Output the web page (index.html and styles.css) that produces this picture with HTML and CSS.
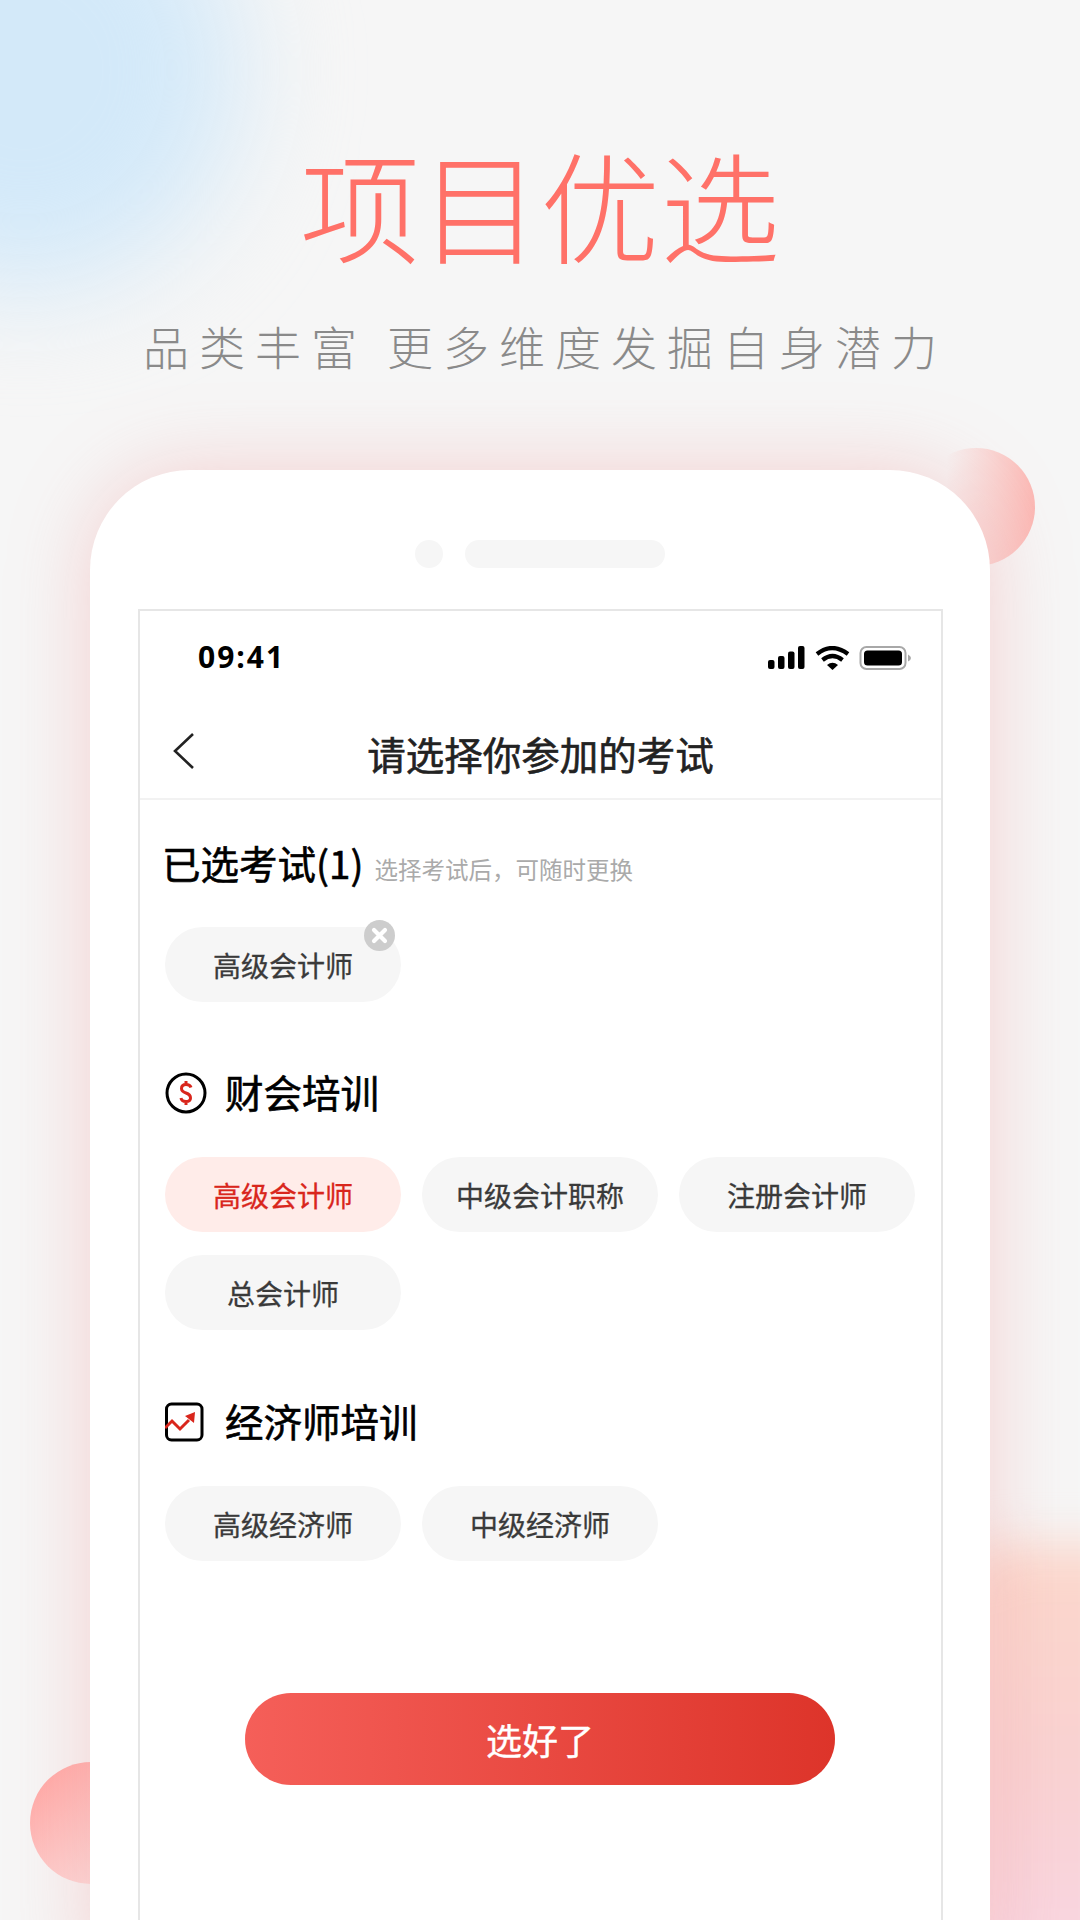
FILE: index.html
```html
<!DOCTYPE html>
<html lang="en">
<head>
    <meta charset="UTF-8">
    <meta name="viewport" content="width=device-width, initial-scale=1.0">
    <title>项目优选</title>
    <link rel="stylesheet" href="styles.css">
</head>
<body>
    <div class="page">
        <div class="blob blob-blue"></div>
        <div class="blob blob-peach"></div>
        <div class="blob blob-top"></div>
        <div class="blob blob-bottom"></div>

        <header class="hero">
            <h1 class="hero-title">项目优选</h1>
            <p class="hero-sub">品类丰富 更多维度发掘自身潜力</p>
        </header>

        <div class="phone">
            <div class="speaker">
                <span class="speaker-dot"></span>
                <span class="speaker-bar"></span>
            </div>

            <div class="screen">
                <div class="status">
                    <span class="time">09:41</span>
                    <svg class="status-icons" width="144" height="26" viewBox="0 0 144 26">
                        <!-- signal -->
                        <rect x="0" y="14" width="6.5" height="9" rx="2" fill="#000"/>
                        <rect x="10" y="10" width="6.5" height="13" rx="2" fill="#000"/>
                        <rect x="20" y="5.500" width="6.5" height="17.500" rx="2" fill="#000"/>
                        <rect x="30" y="0" width="6.500" height="23" rx="2" fill="#000"/>
                        <!-- wifi -->
                        <path d="M49 8 Q64 -4 80 8" fill="none" stroke="#000" stroke-width="4.200"/>
                        <path d="M54.500 14 Q64.500 6 74.500 14" fill="none" stroke="#000" stroke-width="4.200"/>
                        <path d="M59 19 Q64.500 14.500 70 19 L64.500 24 Z" fill="#000"/>
                        <!-- battery -->
                        <rect x="92.500" y="1" width="45" height="22" rx="6" fill="none" stroke="#a8a8a8" stroke-width="2"/>
                        <rect x="96" y="4.500" width="38" height="15" rx="3.500" fill="#000"/>
                        <path d="M140 8.500 Q143 10 143 12 Q143 14 140 15.500 Z" fill="#a8a8a8"/>
                    </svg>
                </div>

                <div class="nav">
                    <svg class="nav-back" width="24" height="38" viewBox="0 0 24 38">
                        <path d="M21 2 L3 19 L21 36" fill="none" stroke="#222" stroke-width="2.600"/>
                    </svg>
                    <span class="nav-title">请选择你参加的考试</span>
                </div>

                <div class="content">
                    <section class="picked">
                        <div class="picked-head">
                            <h2 class="picked-title">已选考试(1)</h2>
                            <span class="picked-hint">选择考试后，可随时更换</span>
                        </div>
                        <div class="chips">
                            <span class="chip">高级会计师
                                <svg class="chip-close" width="31" height="31" viewBox="0 0 31 31">
                                    <circle cx="15.500" cy="15.500" r="15.500" fill="#cdcdcd"/>
                                    <path d="M10 10 L21 21 M21 10 L10 21" stroke="#fff" stroke-width="4.200" stroke-linecap="round"/>
                                </svg>
                            </span>
                        </div>
                    </section>

                    <section class="group group-finance">
                        <div class="group-head">
                            <svg width="42" height="42" viewBox="0 0 42 42">
                                <circle cx="21" cy="21" r="19" fill="none" stroke="#000" stroke-width="3"/>
                                <path d="M26 15.500 Q25 12.500 21 12.500 Q16.500 12.500 16.500 16.500 Q16.500 19.500 21 21 Q25.500 22.500 25.500 26 Q25.500 29.500 21 29.500 Q16.500 29.500 16 26 M21 9 L21 12.500 M21 29.500 L21 33" fill="none" stroke="#d9261c" stroke-width="3"/>
                            </svg>
                            <h2 class="group-title">财会培训</h2>
                        </div>
                        <div class="chips">
                            <span class="chip chip-active">高级会计师</span>
                            <span class="chip">中级会计职称</span>
                            <span class="chip">注册会计师</span>
                            <span class="chip">总会计师</span>
                        </div>
                    </section>

                    <section class="group group-economy">
                        <div class="group-head">
                            <svg width="42" height="42" viewBox="0 0 42 42">
                                <rect x="1.500" y="3" width="35.500" height="36" rx="5" fill="none" stroke="#000" stroke-width="3"/>
                                <path d="M0 27 L7 20 L15 28 L24 19" fill="none" stroke="#d9261c" stroke-width="3"/>
                                <path d="M20 15 L30 11 L29 22 Z" fill="#d9261c"/>
                            </svg>
                            <h2 class="group-title">经济师培训</h2>
                        </div>
                        <div class="chips">
                            <span class="chip">高级经济师</span>
                            <span class="chip">中级经济师</span>
                        </div>
                    </section>

                    <button class="done">选好了</button>
                </div>
            </div>
        </div>
    </div>
</body>
</html>
```

FILE: styles.css
```css
* {
    box-sizing: border-box;
}

body {
    margin: 0;
    font-family: "Noto Sans CJK SC", "Noto Sans", sans-serif;
}

h1, h2, p {
    margin: 0;
    font-weight: 400;
}

.page {
    position: relative;
    width: 1080px;
    height: 1920px;
    overflow: hidden;
    background-color: #f6f6f6;
}

.blob {
    position: absolute;
    border-radius: 50%;
}

.blob-blue {
    left: -190px;
    top: -150px;
    width: 430px;
    height: 440px;
    background-color: #d3e9f9;
    filter: blur(55px);
}

.blob-peach {
    left: 965px;
    top: 1545px;
    width: 240px;
    height: 480px;
    border-radius: 40px;
    background: linear-gradient(180deg, #fbd8cc 0%, #f9d2d2 45%, #f8d8e8 100%);
    filter: blur(24px);
}

.blob-top {
    left: 917px;
    top: 448px;
    width: 118px;
    height: 118px;
    background: linear-gradient(90deg, rgba(250, 230, 230, 0) 25%, #fbb8b4 100%);
}

.blob-bottom {
    left: 30px;
    top: 1762px;
    width: 122px;
    height: 122px;
    background: linear-gradient(135deg, #ffa9a6 10%, #fbe4e4 85%);
}

.hero {
    position: relative;
    padding-top: 128px;
    text-align: center;
}

.hero-title {
    font-size: 120px;
    font-weight: 300;
    line-height: 150px;
    color: #ff7168;
}

.hero-sub {
    margin-top: 37px;
    padding-left: 10px;
    font-size: 46px;
    font-weight: 300;
    line-height: 60px;
    letter-spacing: 10px;
    color: #8a8a8a;
}

.phone {
    position: relative;
    width: 900px;
    height: 1500px;
    margin: 95px auto 0;
    padding-top: 70px;
    background-color: #fff;
    border-radius: 100px 100px 0 0;
    box-shadow: 0 0 80px rgba(240, 140, 140, 0.36);
}

.speaker {
    display: flex;
    justify-content: center;
    align-items: center;
    gap: 22px;
    height: 28px;
}

.speaker-dot {
    width: 28px;
    height: 28px;
    border-radius: 50%;
    background-color: #f6f6f6;
}

.speaker-bar {
    width: 200px;
    height: 28px;
    border-radius: 14px;
    background-color: #f6f6f6;
}

.screen {
    width: 805px;
    height: 1400px;
    margin: 41px 0 0 48px;
    border: 2px solid #e6e6e6;
    border-bottom: none;
}

.status {
    display: flex;
    justify-content: space-between;
    align-items: center;
    height: 78px;
    padding: 12px 29px 0 58px;
}

.status-icons {
    margin-top: 6px;
}

.time {
    font-family: "Open Sans", "Noto Sans", sans-serif;
    font-size: 30px;
    font-weight: 700;
    color: #000;
    letter-spacing: 2px;
}

.nav {
    position: relative;
    display: flex;
    justify-content: center;
    align-items: center;
    height: 111px;
    padding-top: 18px;
    border-bottom: 2px solid #f2f2f2;
}

.nav-back {
    position: absolute;
    left: 32px;
    top: 43px;
}

.nav-title {
    font-size: 38.500px;
    font-weight: 400;
    -webkit-text-stroke: 0.6px #222;
    color: #222;
}

.content {
    padding: 0 25px;
}

.picked {
    padding-top: 32px;
}

.picked-head {
    display: flex;
    align-items: baseline;
    gap: 11px;
    height: 60px;
    margin-left: -3px;
}

.picked-title, .group-title {
    font-size: 38.500px;
    font-weight: 400;
    -webkit-text-stroke: 0.6px #000;
    line-height: 60px;
    color: #000;
}

.group-title {
    margin-bottom: 5px;
}

.picked-hint {
    font-size: 23.500px;
    color: #aaa;
}

.chips {
    display: grid;
    grid-template-columns: repeat(3, 236px);
    gap: 23px 21px;
}

.picked .chips {
    margin-top: 35px;
}

.chip {
    position: relative;
    display: flex;
    justify-content: center;
    align-items: center;
    height: 75px;
    border-radius: 38px;
    background-color: #f6f6f6;
    font-size: 28px;
    -webkit-text-stroke: 0.3px #3a3a3a;
    color: #3a3a3a;
}

.chip-active {
    background-color: #ffece9;
    -webkit-text-stroke-color: #d9261c;
    color: #d9261c;
}

.chip-close {
    position: absolute;
    right: 6px;
    top: -7px;
}

.group-head {
    display: flex;
    align-items: center;
    gap: 18px;
    height: 60px;
}

.group-finance {
    margin-top: 61px;
}

.group-economy {
    margin-top: 62px;
}

.group .chips {
    margin-top: 34px;
}

.done {
    display: block;
    width: 590px;
    height: 92px;
    margin: 132px 0 0 80px;
    border: none;
    border-radius: 46px;
    background: linear-gradient(90deg, #f55f59 0%, #dd342a 100%);
    color: #fff;
    font-family: inherit;
    font-size: 36px;
    font-weight: 400;
    -webkit-text-stroke: 0.4px #fff;
}
```
